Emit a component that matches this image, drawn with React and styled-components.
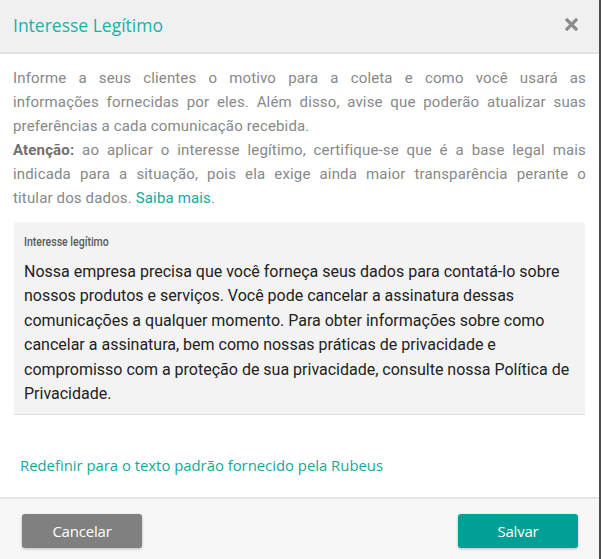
import React from "react";
import styled, { createGlobalStyle } from "styled-components";

const GlobalStyle = createGlobalStyle`
  body {
    margin: 0;
    background: #4d4d4d;
    font-family: Roboto, "Noto Sans", sans-serif;
  }
`;

const Modal = styled.div`
  width: 599px;
  height: 559px;
  background: #fff;
  display: flex;
  flex-direction: column;
`;

const Header = styled.header`
  height: 54px;
  background: #f0f0f0;
  border-bottom: 2px solid #e2e2e2;
  display: flex;
  align-items: center;
  justify-content: space-between;
  padding: 0 21px 3px 13px;
  box-sizing: border-box;
`;

const Title = styled.h4`
  margin: 0;
  font-family: "Open Sans", sans-serif;
  font-weight: 400;
  font-size: 17.5px;
  color: #1cb1a6;
`;

const CloseButton = styled.button`
  border: 0;
  background: none;
  padding: 0;
  display: flex;
  cursor: pointer;
`;

const Body = styled.div`
  flex: 1;
  padding: 12px 13px 20px 13px;
  display: flex;
  flex-direction: column;
`;

const Intro = styled.div`
  font-size: 15px;
  line-height: 24px;
  color: #888;
  letter-spacing: 0.15px;

  strong {
    color: #707070;
    font-weight: 700;
  }
`;

// keeps the reference's justified line breaks
const Line = styled.span`
  display: block;
  text-align: ${(p) => (p.$last ? "left" : "justify")};
  text-align-last: ${(p) => (p.$last ? "left" : "justify")};
`;

const Link = styled.a`
  color: #14a89c;
  text-decoration: none;
  cursor: pointer;
`;

const TextBox = styled.div`
  margin: 12px 1px 0 1px;
  background: #f3f3f3;
  border-radius: 3px 3px 0 0;
  border-bottom: 1px solid #dcdcdc;
  padding: 10px 10px 8px 10px;
`;

const BoxLabel = styled.label`
  display: block;
  font-size: 13.5px;
  font-weight: 500;
  line-height: 18px;
  color: #5a5a5a;
  transform: scaleX(0.78);
  transform-origin: left center;
  white-space: nowrap;
`;

const BoxText = styled.div`
  margin-top: 10px;
  font-size: 16px;
  line-height: 24.4px;
  color: #222;
`;

const ResetLink = styled(Link)`
  margin: 40px 0 0 7px;
  font-family: "Open Sans", sans-serif;
  font-size: 14.85px;
  line-height: 20px;
`;

const Footer = styled.footer`
  height: 62px;
  border-top: 2px solid #e5e5e5;
  background: #f7f7f7;
  display: flex;
  justify-content: space-between;
  align-items: flex-start;
  padding: 15px 21px 0 22px;
  box-sizing: border-box;
`;

const Button = styled.button`
  width: 120px;
  height: 34px;
  border: 0;
  border-radius: 3px;
  background: ${(p) => (p.$primary ? "#00a096" : "#808080")};
  color: #fff;
  font-family: "Open Sans", sans-serif;
  font-size: 15px;
  letter-spacing: -0.2px;
  box-shadow: 0 1px 3px rgba(0, 0, 0, 0.25);
  cursor: pointer;
`;

export default function App() {
  return (
    <>
      <GlobalStyle />
      <Modal>
        <Header>
          <Title>Interesse Legítimo</Title>
          <CloseButton aria-label="Fechar">
            <svg width="13" height="13" viewBox="0 0 13 13">
              <path d="M2 2 L11 11 M11 2 L2 11" stroke="#8c8c8c" strokeWidth="3.2" strokeLinecap="square" />
            </svg>
          </CloseButton>
        </Header>
        <Body>
          <Intro>
            <Line>Informe a seus clientes o motivo para a coleta e como você usará as</Line>
            <Line>informações fornecidas por eles. Além disso, avise que poderão atualizar suas</Line>
            <Line $last>preferências a cada comunicação recebida.</Line>
            <Line>
              <strong>Atenção:</strong> ao aplicar o interesse legítimo, certifique-se que é a base legal mais
            </Line>
            <Line>indicada para a situação, pois ela exige ainda maior transparência perante o</Line>
            <Line $last>
              titular dos dados. <Link>Saiba mais</Link>.
            </Line>
          </Intro>
          <TextBox>
            <BoxLabel>Interesse legítimo</BoxLabel>
            <BoxText>
              Nossa empresa precisa que você forneça seus dados para contatá-lo sobre
              nossos produtos e serviços. Você pode cancelar a assinatura dessas
              comunicações a qualquer momento. Para obter informações sobre como
              cancelar a assinatura, bem como nossas práticas de privacidade e
              compromisso com a proteção de sua privacidade, consulte nossa Política de
              Privacidade.
            </BoxText>
          </TextBox>
          <ResetLink>Redefinir para o texto padrão fornecido pela Rubeus</ResetLink>
        </Body>
        <Footer>
          <Button>Cancelar</Button>
          <Button $primary>Salvar</Button>
        </Footer>
      </Modal>
    </>
  );
}
